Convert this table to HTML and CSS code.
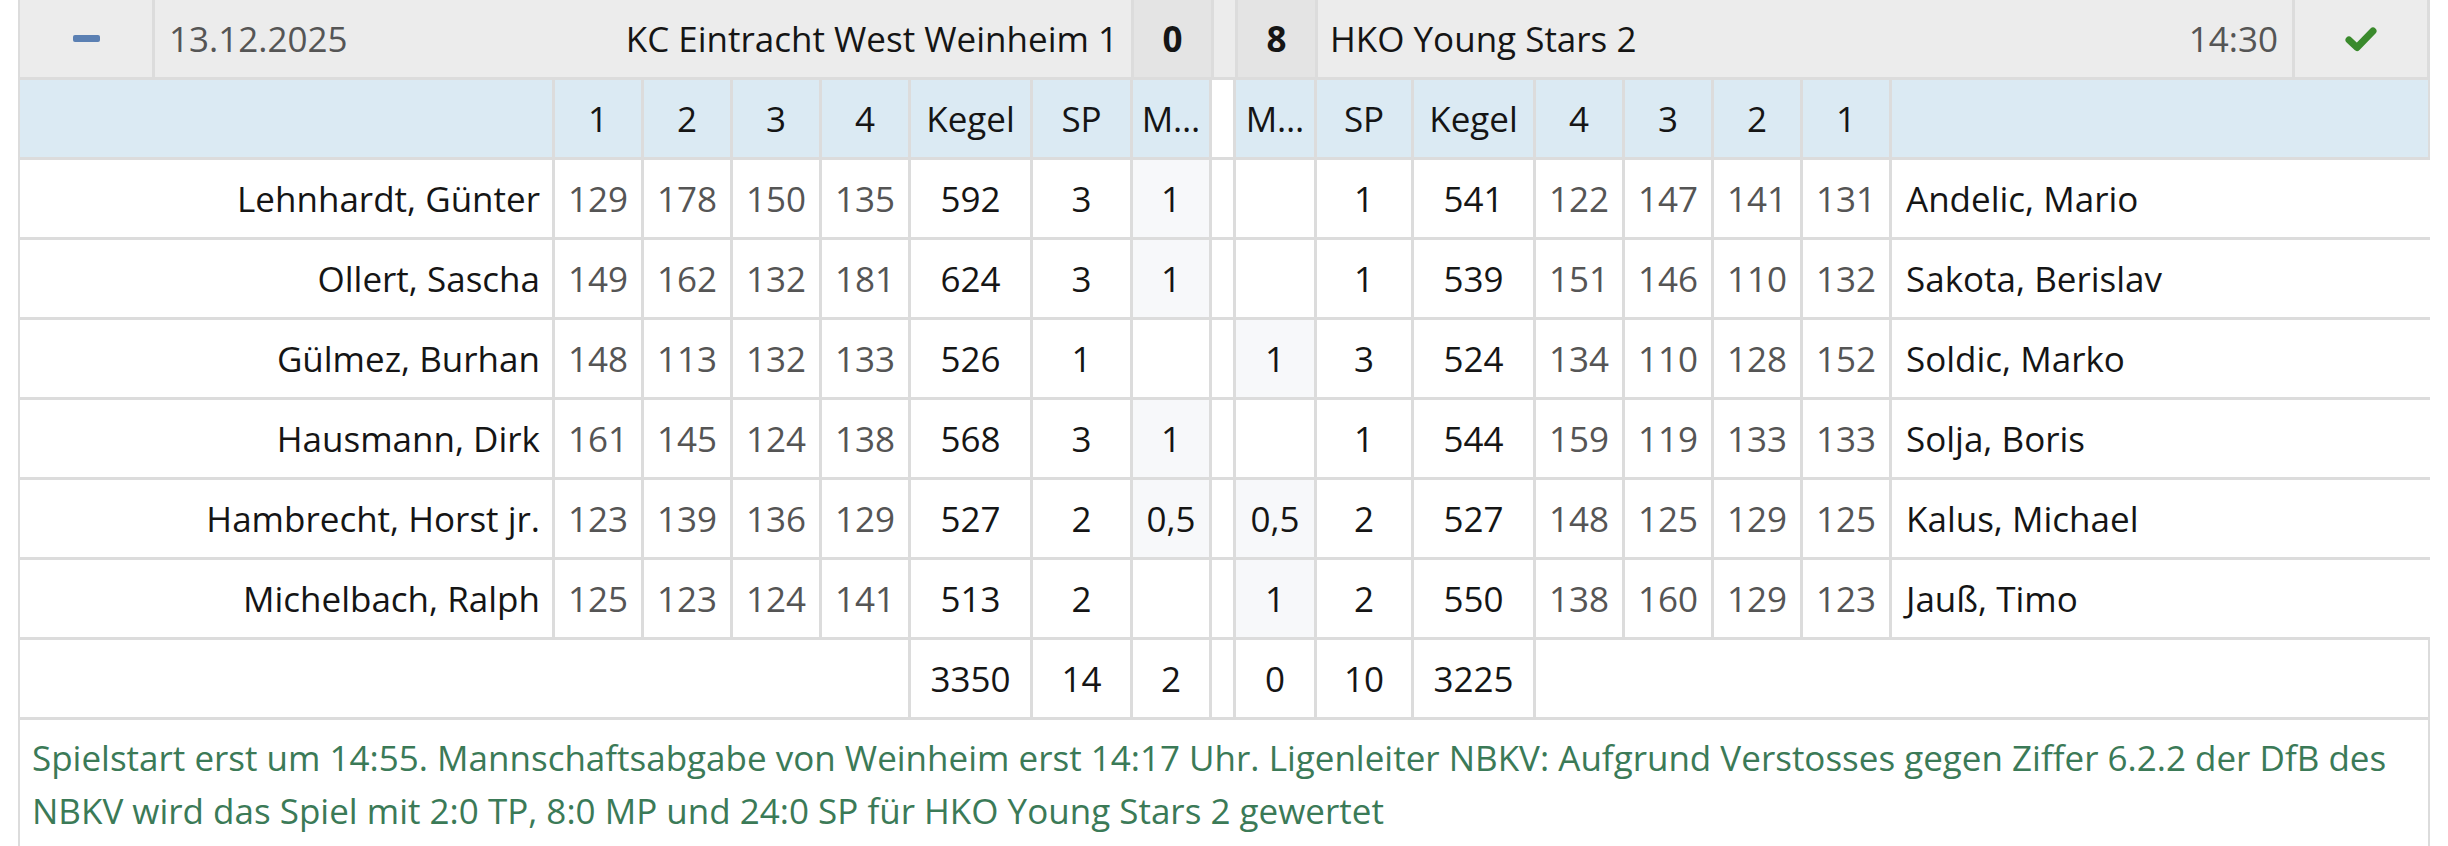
FILE: index.html
```html
<!DOCTYPE html>
<html lang="de">
<head>
<meta charset="utf-8">
<title>Spielbericht</title>
<link rel="stylesheet" href="styles.css">
</head>
<body>
<div class="match">
  <div class="head">
    <div class="hcell toggle"><span class="minus"></span></div>
    <div class="hcell team home"><span class="date">13.12.2025</span><span class="tname">KC Eintracht West Weinheim 1</span></div>
    <div class="hcell score">0</div>
    <div class="hcell sep"></div>
    <div class="hcell score">8</div>
    <div class="hcell team away"><span class="tname">HKO Young Stars 2</span><span class="time">14:30</span></div>
    <div class="hcell status">
      <svg width="32" height="26" viewBox="0 0 32 26"><polyline points="4,14 12,21.5 28,5" fill="none" stroke="#3a8a2c" stroke-width="7" stroke-linejoin="round" stroke-linecap="round"/></svg>
    </div>
  </div>

  <div class="grid">
    <div class="c lbl"></div><div class="c lbl">1</div><div class="c lbl">2</div><div class="c lbl">3</div><div class="c lbl">4</div><div class="c lbl">Kegel</div><div class="c lbl">SP</div><div class="c lbl">M…</div><div class="c gapc"></div><div class="c lbl">M…</div><div class="c lbl">SP</div><div class="c lbl">Kegel</div><div class="c lbl">4</div><div class="c lbl">3</div><div class="c lbl">2</div><div class="c lbl">1</div><div class="c lbl"></div>

    <div class="c pl home">Lehnhardt, Günter</div><div class="c g">129</div><div class="c g">178</div><div class="c g">150</div><div class="c g">135</div><div class="c v">592</div><div class="c v">3</div><div class="c v win">1</div><div class="c gapc"></div><div class="c v"></div><div class="c v">1</div><div class="c v">541</div><div class="c g">122</div><div class="c g">147</div><div class="c g">141</div><div class="c g">131</div><div class="c pl away">Andelic, Mario</div>

    <div class="c pl home">Ollert, Sascha</div><div class="c g">149</div><div class="c g">162</div><div class="c g">132</div><div class="c g">181</div><div class="c v">624</div><div class="c v">3</div><div class="c v win">1</div><div class="c gapc"></div><div class="c v"></div><div class="c v">1</div><div class="c v">539</div><div class="c g">151</div><div class="c g">146</div><div class="c g">110</div><div class="c g">132</div><div class="c pl away">Sakota, Berislav</div>

    <div class="c pl home">Gülmez, Burhan</div><div class="c g">148</div><div class="c g">113</div><div class="c g">132</div><div class="c g">133</div><div class="c v">526</div><div class="c v">1</div><div class="c v"></div><div class="c gapc"></div><div class="c v win">1</div><div class="c v">3</div><div class="c v">524</div><div class="c g">134</div><div class="c g">110</div><div class="c g">128</div><div class="c g">152</div><div class="c pl away">Soldic, Marko</div>

    <div class="c pl home">Hausmann, Dirk</div><div class="c g">161</div><div class="c g">145</div><div class="c g">124</div><div class="c g">138</div><div class="c v">568</div><div class="c v">3</div><div class="c v win">1</div><div class="c gapc"></div><div class="c v"></div><div class="c v">1</div><div class="c v">544</div><div class="c g">159</div><div class="c g">119</div><div class="c g">133</div><div class="c g">133</div><div class="c pl away">Solja, Boris</div>

    <div class="c pl home">Hambrecht, Horst jr.</div><div class="c g">123</div><div class="c g">139</div><div class="c g">136</div><div class="c g">129</div><div class="c v">527</div><div class="c v">2</div><div class="c v win">0,5</div><div class="c gapc"></div><div class="c v win">0,5</div><div class="c v">2</div><div class="c v">527</div><div class="c g">148</div><div class="c g">125</div><div class="c g">129</div><div class="c g">125</div><div class="c pl away">Kalus, Michael</div>

    <div class="c pl home">Michelbach, Ralph</div><div class="c g">125</div><div class="c g">123</div><div class="c g">124</div><div class="c g">141</div><div class="c v">513</div><div class="c v">2</div><div class="c v"></div><div class="c gapc"></div><div class="c v win">1</div><div class="c v">2</div><div class="c v">550</div><div class="c g">138</div><div class="c g">160</div><div class="c g">129</div><div class="c g">123</div><div class="c pl away">Jauß, Timo</div>

    <div class="c span5"></div><div class="c v">3350</div><div class="c v">14</div><div class="c v">2</div><div class="c gapc"></div><div class="c v">0</div><div class="c v">10</div><div class="c v">3225</div><div class="c span5"></div>
  </div>

  <div class="note">Spielstart erst um 14:55. Mannschaftsabgabe von Weinheim erst 14:17 Uhr. Ligenleiter NBKV: Aufgrund Verstosses gegen Ziffer 6.2.2 der DfB des NBKV wird das Spiel mit 2:0 TP, 8:0 MP und 24:0 SP für HKO Young Stars 2 gewertet</div>
</div>
</body>
</html>
```

FILE: styles.css
```css
*, *::before, *::after {
  box-sizing: border-box;
}

html, body {
  margin: 0;
  padding: 0;
  background: #ffffff;
}

body {
  font-family: "Open Sans", Lato, sans-serif;
  font-size: 35px;
  color: #151515;
}

.match {
  margin-left: 18px;
  width: 2412px;
  padding: 0 2px;
  background: #dcdcdc;
  display: flex;
  flex-direction: column;
  gap: 3px;
  overflow: hidden;
}

.head {
  display: flex;
  gap: 3px;
  height: 77px;
}

.hcell {
  background: #ececec;
  display: flex;
  align-items: center;
  flex: none;
}

.toggle {
  width: 132px;
  justify-content: center;
}

.minus {
  display: block;
  width: 27px;
  height: 7px;
  border-radius: 2px;
  background: #5b80b3;
}

.team {
  width: 976px;
  justify-content: space-between;
  padding: 0 13px 0 14px;
}

.date, .time {
  color: #555555;
}

.score {
  width: 77px;
  justify-content: center;
  background: #e4e4e4;
  font-weight: 700;
}

.sep {
  width: 21px;
  background: #ececec;
}

.away {
  width: 974px;
  padding: 0 14px 0 12px;
}

.status {
  width: 132px;
  justify-content: center;
}

.grid {
  display: grid;
  width: 2408px;
  grid-template-columns: 532px repeat(4, 86px) 119px 97px 76px 21px 78px 94px 119px repeat(4, 86px) 536px;
  grid-auto-rows: 77px;
  gap: 3px;
}

.c {
  background: #ffffff;
  display: flex;
  align-items: center;
  justify-content: center;
  white-space: nowrap;
  overflow: hidden;
  min-width: 0;
}

.lbl {
  background: #dbeaf3;
}

.gapc {
  background: #ffffff;
}

.pl.home {
  justify-content: flex-end;
  padding-right: 12px;
}

.pl.away {
  justify-content: flex-start;
  padding-left: 14px;
}

.g {
  color: #555555;
}

.win {
  background: #f7f8fa;
}

.span5 {
  grid-column: span 5;
}

.note {
  background: #ffffff;
  color: #3b7a57;
  line-height: 53px;
  padding: 11px 12px 40px 12px;
}
```
